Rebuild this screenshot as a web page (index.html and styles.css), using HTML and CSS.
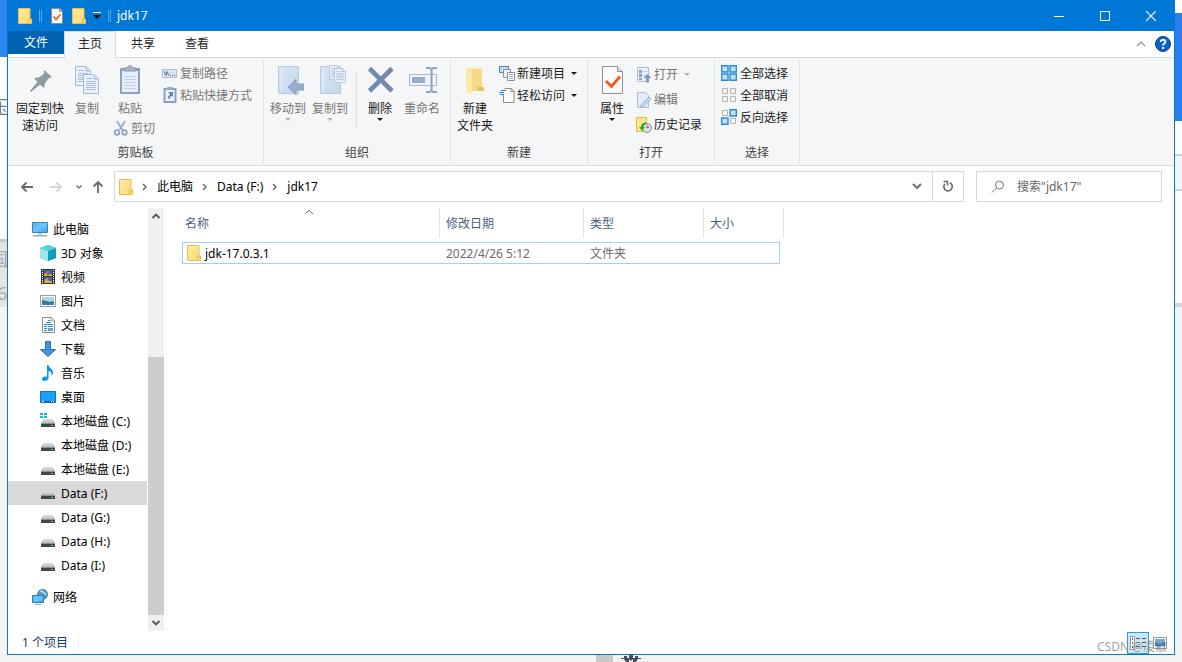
FILE: index.html
```html
<!DOCTYPE html>
<html lang="zh-CN">
<head>
<meta charset="utf-8">
<title>jdk17</title>
<link rel="stylesheet" href="styles.css">
</head>
<body>
<svg class="defs" width="0" height="0" aria-hidden="true">
  <defs>
    <linearGradient id="gFolder" x1="0" y1="0" x2="1" y2="1"><stop offset="0" stop-color="#ffeaa0"/><stop offset="1" stop-color="#ffdb74"/></linearGradient>
    <linearGradient id="gScreen" x1="0" y1="0" x2="1" y2="1"><stop offset="0" stop-color="#4fb4f8"/><stop offset=".5" stop-color="#6cc8ff"/><stop offset="1" stop-color="#2fa0f0"/></linearGradient>
    <linearGradient id="gSheet" x1="0" y1="0" x2="1" y2="1"><stop offset="0" stop-color="#d9e6f5"/><stop offset="1" stop-color="#c4d6ec"/></linearGradient>
    <linearGradient id="gDrive" x1="0" y1="0" x2="0" y2="1"><stop offset="0" stop-color="#e2e4e6"/><stop offset="1" stop-color="#b9bcc0"/></linearGradient>
    <symbol id="folder" viewBox="0 0 14 16"><path d="M.5.5h11.5v10.500h1.500v4.500H.5z" fill="url(#gFolder)" stroke="#e8bf4c"/><path d="M10.500 15V11.500H13" fill="none" stroke="#e8bf4c"/></symbol>
    <symbol id="checkdoc" viewBox="0 0 12 16"><path d="M.5.5h8l3 3v12H.5z" fill="#fafafa" stroke="#8b8b8b"/><path d="M8.500.5v3h3" fill="#ddd" stroke="#8b8b8b"/><path d="M2.500 8.500l2.500 3 4.500-5" fill="none" stroke="#e8642c" stroke-width="1.800"/></symbol>
    <symbol id="drive" viewBox="0 0 16 16"><path d="M3.500 6h9L15 10H1z" fill="url(#gDrive)"/><path d="M1 10h14v4H1z" fill="#414548"/><path d="M1 10h14v1H1z" fill="#8e9296"/><path d="M11 12h2v1h-2z" fill="#59e34c"/></symbol>
    <symbol id="page" viewBox="0 0 16 20"><path d="M.5.500h10.500l4.500 4.500v14.500H.5z" fill="#eaf1fa" stroke="#a3b9d8"/><path d="M11 .5V5h4.500" fill="#d2dff0" stroke="#a3b9d8"/><path d="M3 4.500h6M3 7.500h10M3 9.500h10M3 11.500h10M3 13.500h10M3 15.500h10" stroke="#a9bfdd"/></symbol>
    <symbol id="tri" viewBox="0 0 6 3"><path d="M0 0h6L3 3z" fill="currentColor"/></symbol>
    <symbol id="crumb" viewBox="0 0 6 8"><path d="M1 1l3 3-3 3" fill="none" stroke="#6d6d6d" stroke-width="1.500"/></symbol>
  </defs>
</svg>

<div class="backdrop" aria-hidden="true">
  <div class="edge-left"><span class="slab-blue"></span><span class="frag frag-a">压</span><span class="slab-grey"><span class="frag">国</span><span class="frag">6</span></span></div>
  <div class="edge-right"><span class="slab-blue"></span><span class="slab-field"></span><span class="slab-rest"></span></div>
  <div class="edge-bottom"><span class="bottom-block"></span>
    <svg width="22" height="8" viewBox="0 0 22 8"><path d="M1 3h3V1h3v2h2V0h4v3h2V1h3v2h3v1h-3l-2 3h-3V4l-2 2-2-2v3H6L4 4H1z" fill="#4b4a5c"/></svg>
  </div>
</div>

<main class="window">
  <header class="titlebar">
    <svg width="14" height="16"><use href="#folder"/></svg>
    <span class="title-sep"></span>
    <button class="quick quick-props" aria-label="属性"><svg width="12" height="16"><use href="#checkdoc"/></svg></button>
    <button class="quick quick-folder" aria-label="新建文件夹"><svg width="14" height="16"><use href="#folder"/></svg></button>
    <button class="quick quick-more" aria-label="自定义快速访问工具栏"><svg width="8" height="7" viewBox="0 0 8 7"><path d="M0 0h8v1H0z" fill="#fff"/><path d="M0 3h8L4 7z" fill="#111"/></svg></button>
    <span class="title-sep"></span>
    <h1>jdk17</h1>
    <div class="controls">
      <button aria-label="最小化"><svg width="10" height="10"><path d="M0 5.500h10" stroke="#fff"/></svg></button>
      <button aria-label="最大化"><svg width="10" height="10"><path d="M.5.500h9v9h-9z" fill="none" stroke="#fff"/></svg></button>
      <button aria-label="关闭"><svg width="10" height="10"><path d="M0 0l10 10M10 0L0 10" stroke="#fff" stroke-width="1.200"/></svg></button>
    </div>
  </header>

  <nav class="tabs">
    <button class="tab file">文件</button>
    <button class="tab active">主页</button>
    <button class="tab">共享</button>
    <button class="tab">查看</button>
    <span class="tab-tools">
      <button aria-label="最小化功能区"><svg width="10" height="6" viewBox="0 0 10 6"><path d="M1 5l4-4 4 4" fill="none" stroke="#8f8f8f" stroke-width="1.200"/></svg></button>
      <button aria-label="帮助" class="help"><svg width="16" height="16" viewBox="0 0 16 16"><circle cx="8" cy="8" r="7.500" fill="#0a63c4" stroke="#083f7f"/><path d="M5.700 6c0-3 4.700-3 4.700-.4C10.400 7.500 8 7.400 8 9.600" fill="none" stroke="#fff" stroke-width="1.900"/><path d="M7 11h2v2H7z" fill="#fff"/></svg></button>
    </span>
  </nav>

  <section class="ribbon">
    <div class="group g-clip">
      <div class="group-body">
        <button class="big w-pin"><svg width="32" height="32" viewBox="0 0 32 32"><path d="M20 5l8 7-3 1-4 5-1 5-4-3.500-9 7.500-1-1 7.500-9L10 13l5-.5 5-4z" fill="#8b9aa3"/></svg><span>固定到快<br>速访问</span></button>
        <button class="big w-copy" disabled><svg width="32" height="32" viewBox="0 0 32 32"><use href="#page" x="4" y="1" width="16" height="20"/><use href="#page" x="12" y="9" width="16" height="20"/></svg><span>复制</span></button>
        <div class="paste-col">
          <button class="big" disabled><svg width="32" height="32" viewBox="0 0 32 32"><path d="M6 3h20v26H6z" fill="#8ba1c4"/><path d="M8 6h16v21H8z" fill="#e6eef9"/><path d="M10 11.500h12M10 14.500h12M10 17.500h12M10 20.500h12M10 23.500h12" stroke="#c1d0e6"/><path d="M10 6V3h3c1-3 5-3 6 0h3v3z" fill="#a9b6c8" stroke="#8795ab"/></svg><span>粘贴</span></button>
          <button class="small" disabled><svg width="16" height="16" viewBox="0 0 16 16"><path d="M4 1l5.500 9M12 1L6.500 10" stroke="#9aadca" stroke-width="1.800"/><circle cx="4" cy="12.500" r="2.300" fill="none" stroke="#8ca3c5" stroke-width="1.700"/><circle cx="11.500" cy="12.500" r="2.300" fill="none" stroke="#8ca3c5" stroke-width="1.700"/></svg><span>剪切</span></button>
        </div>
        <div class="rows">
          <button class="small" disabled><svg width="16" height="16" viewBox="0 0 16 16"><path d="M.5 4.500h14v8H.5z" fill="#d8e4f3" stroke="#aabdd9"/><path d="M2 6.500l2 4 1-4 2 4M8 10.500h1M10 10.500h1M12 10.500h1" stroke="#5c7194" fill="none"/></svg><span>复制路径</span></button>
          <button class="small" disabled><svg width="16" height="16" viewBox="0 0 16 16"><path d="M2.500 2h11v13h-11z" fill="#eef3fa" stroke="#8ba1c4" stroke-width="2"/><path d="M5 0h6v3H5z" fill="#9aabc6"/><path d="M6 5h5v5L9.500 8.500 7 12 5.500 11 8 7z" fill="#6480ad"/></svg><span>粘贴快捷方式</span></button>
        </div>
      </div>
      <h2>剪贴板</h2>
    </div>
    <div class="group g-org">
      <div class="group-body">
        <button class="big w-42" disabled><svg width="32" height="32" viewBox="0 0 32 32"><path d="M6.500 1.500h20v27h-20z" fill="url(#gSheet)" stroke="#b7cae4"/><path d="M9 2v26" stroke="#e6effa"/><path d="M16 22l8-8v5h8v6h-8v5z" fill="#9aaecb" stroke="#8ba1c2"/></svg><span>移动到</span><svg class="tri" width="6" height="3"><use href="#tri"/></svg></button>
        <button class="big w-42" disabled><svg width="32" height="32" viewBox="0 0 32 32"><path d="M6.500 1.500h20v27h-20z" fill="url(#gSheet)" stroke="#b7cae4"/><path d="M9 2v26" stroke="#e6effa"/><use href="#page" x="15" y="0" width="12" height="15"/><use href="#page" x="20" y="3" width="12" height="15"/></svg><span>复制到</span><svg class="tri" width="6" height="3"><use href="#tri"/></svg></button>
        <i class="inner-sep"></i>
        <button class="big w-40"><svg width="32" height="32" viewBox="0 0 32 32"><path d="M5.500 3.500L28 26M28 3.500L5.500 26" stroke="#7289b2" stroke-width="4.600"/></svg><span>删除</span><svg class="tri" width="6" height="3"><use href="#tri"/></svg></button>
        <button class="big w-44" disabled><svg width="32" height="32" viewBox="0 0 32 32"><path d="M3.500 9.500h27v11h-27z" fill="#f1f5fb" stroke="#a5badb"/><path d="M6 12h13v6H6z" fill="#98acce"/><path d="M20 3h4l1.500 1.500L27 3h4M25.500 4v22M20 27h4l1.500-1.500L27 27h4" fill="none" stroke="#8fa4c6" stroke-width="2"/></svg><span>重命名</span></button>
      </div>
      <h2>组织</h2>
    </div>
    <div class="group g-new">
      <div class="group-body">
        <button class="big w-48"><svg width="32" height="32" viewBox="0 0 32 32"><path d="M7 3h16v23H7z" fill="#f7d985"/><path d="M18 22h7v4h-7z" fill="#e9c15e"/><path d="M7 3l6 4v23l-6-3z" fill="#ffe9a6"/><path d="M7 3h16v1H9z" fill="#fdebb5"/></svg><span>新建<br>文件夹</span></button>
        <div class="rows">
          <button class="small"><svg width="16" height="16" viewBox="0 0 16 16"><path d="M.5 1.500h9v6h-9z" fill="#bfe0f2" stroke="#4b7fa3"/><path d="M4.500 4.500h7v8h-7z" fill="#f4f4f4" stroke="#899"/><path d="M8.500 7.500h7v8h-7z" fill="#fff" stroke="#8c8f94"/><path d="M10 9.500h4M10 11.500h4M10 13.500h4" stroke="#93b7d6"/></svg><span>新建项目</span><svg class="tri side" width="6" height="3"><use href="#tri"/></svg></button>
          <button class="small"><svg width="16" height="16" viewBox="0 0 16 16"><path d="M5.500 1.500h7l2.500 2.500v11.500H4.500V7" fill="#fafafa" stroke="#8c8c8c"/><path d="M12 1v3.500h3" fill="none" stroke="#8c8c8c"/><path d="M2 3.500h5M0 5.500h5M1 7.500h4" stroke="#2387d8"/></svg><span>轻松访问</span><svg class="tri side" width="6" height="3"><use href="#tri"/></svg></button>
        </div>
      </div>
      <h2>新建</h2>
    </div>
    <div class="group g-open">
      <div class="group-body">
        <button class="big w-48"><svg width="32" height="32" viewBox="0 0 32 32"><path d="M6.500 1.500h15l5 5v22h-20z" fill="#fbfbfb" stroke="#929292"/><path d="M21.500 1.500v5h5" fill="#e2e2e2" stroke="#929292"/><path d="M10 16l5.500 5.500L24 11.500" fill="none" stroke="#f1591c" stroke-width="2.800"/></svg><span>属性</span><svg class="tri" width="6" height="3"><use href="#tri"/></svg></button>
        <div class="rows loose">
          <button class="small" disabled><svg width="16" height="16" viewBox="0 0 16 16"><path d="M1.500.500h11v14h-11z" fill="#e8eff8" stroke="#a9bcd8"/><path d="M3 3h3v3H3zM3 7h3v3H3zM3 11h3v2H3z" fill="#8ba2c7"/><path d="M7.500 4.500h4M7.500 8.500h3" stroke="#b0c2dc"/><path d="M11.500 7l4 4h-2.500v4.500h-3V11H7.500z" fill="#8398be"/></svg><span>打开</span><svg class="tri side" width="6" height="3"><use href="#tri"/></svg></button>
          <button class="small" disabled><svg width="16" height="16" viewBox="0 0 16 16"><path d="M1.500.500h8l3 3v12h-11z" fill="#e3ecf8" stroke="#a9bcd8"/><path d="M5 13L13 5l2 2-8 8-3 .5z" fill="#c9d8ee" stroke="#9fb4d4"/></svg><span>编辑</span></button>
          <button class="small"><svg width="16" height="16" viewBox="0 0 16 16"><path d="M.5.500h10v14H.5z" fill="#ffe68a" stroke="#dfb93c"/><circle cx="11" cy="11" r="4.500" fill="#dfe1e3" stroke="#85898d"/><path d="M11 8.500V11l2-1" stroke="#666" fill="none"/><path d="M10 5.500C6 5.500 5 8 5 10H3l3 4 3-4H7.500c0-2 1-2.500 2.500-2.500z" fill="#2fa82f"/></svg><span>历史记录</span></button>
        </div>
      </div>
      <h2>打开</h2>
    </div>
    <div class="group g-select">
      <div class="group-body">
        <div class="rows">
          <button class="small"><svg width="16" height="16" viewBox="0 0 16 16"><path d="M.7.700h6.300V7H.7zM9 .7h6.300V7H9zM.7 9h6.300v6.300H.7zM9 9h6.300v6.300H9z" fill="#bfe2fb" stroke="#2a8ddc" stroke-width="1.400"/></svg><span>全部选择</span></button>
          <button class="small"><svg width="16" height="16" viewBox="0 0 16 16"><path d="M1.500 1.500h5v5h-5zM9.500 1.500h5v5h-5zM1.500 9.500h5v5h-5zM9.500 9.500h5v5h-5z" fill="#fff" stroke="#b0b0b0"/></svg><span>全部取消</span></button>
          <button class="small"><svg width="16" height="16" viewBox="0 0 16 16"><path d="M1.500 1.500h5v5h-5zM9.500 9.500h5v5h-5z" fill="#fff" stroke="#b0b0b0"/><path d="M9 .7h6.300V7H9zM.7 9h6.300v6.300H.7z" fill="#bfe2fb" stroke="#2a8ddc" stroke-width="1.400"/></svg><span>反向选择</span></button>
        </div>
      </div>
      <h2>选择</h2>
    </div>
  </section>

  <section class="addressbar">
    <div class="history">
      <button aria-label="后退"><svg width="14" height="12" viewBox="0 0 14 12"><path d="M13 6H2M6.500 1.500L2 6l4.500 4.500" fill="none" stroke="#6a6a6a" stroke-width="1.800"/></svg></button>
      <button aria-label="前进" disabled><svg width="14" height="12" viewBox="0 0 14 12"><path d="M1 6h11M7.500 1.500L12 6l-4.500 4.500" fill="none" stroke="#d6d6d6" stroke-width="1.800"/></svg></button>
      <button aria-label="最近位置" class="narrow"><svg width="8" height="6" viewBox="0 0 8 6"><path d="M1.500 1.500L4 4l2.500-2.500" fill="none" stroke="#777" stroke-width="1.500"/></svg></button>
      <button aria-label="向上" class="up"><svg width="12" height="14" viewBox="0 0 12 14"><path d="M6 13V2M1.500 6.500L6 2l4.500 4.500" fill="none" stroke="#6a6a6a" stroke-width="1.800"/></svg></button>
    </div>
    <div class="path">
      <svg width="14" height="16"><use href="#folder"/></svg>
      <svg width="6" height="8"><use href="#crumb"/></svg>
      <a href="#">此电脑</a>
      <svg width="6" height="8"><use href="#crumb"/></svg>
      <a href="#">Data (F:)</a>
      <svg width="6" height="8"><use href="#crumb"/></svg>
      <a href="#">jdk17</a>
      <button class="path-drop" aria-label="以前的位置"><svg width="10" height="7" viewBox="0 0 10 7"><path d="M1 1l4 4 4-4" fill="none" stroke="#6a6a6a" stroke-width="1.900"/></svg></button>
      <button class="refresh" aria-label="刷新"><svg width="12" height="13" viewBox="0 0 12 13"><path d="M2.800 4a4.200 4.200 0 1 0 5-1.200" fill="none" stroke="#6a6a6a" stroke-width="1.700"/><path d="M1.500 1.500h4v4" fill="none" stroke="#6a6a6a" stroke-width="1.500"/></svg></button>
    </div>
    <label class="search">
      <svg width="14" height="14" viewBox="0 0 14 14"><circle cx="8.500" cy="5" r="4" fill="none" stroke="#777"/><path d="M5.500 8L1 12.500" stroke="#777"/></svg>
      <input type="search" aria-label="搜索" placeholder='搜索"jdk17"'>
    </label>
  </section>

  <section class="content">
    <aside class="tree">
      <ul>
        <li class="root"><a href="#"><svg width="16" height="16" viewBox="0 0 16 16"><path d="M.5 1.500h15v10H.5z" fill="url(#gScreen)" stroke="#3d83b5"/><path d="M6 12h4v1.500H6z" fill="#b5c4cf"/><path d="M1 14h14v1.500H1z" fill="#9aabb8"/></svg><span>此电脑</span></a></li>
        <li><a href="#"><svg width="16" height="16" viewBox="0 0 16 16"><path d="M8 0l8 3v10l-8 3-8-3V3z" fill="#35c3d6"/><path d="M0 3l8 3v10l-8-3z" fill="#9be8ec"/><path d="M8 6l8-3v10l-8 3z" fill="#0f9fbd"/><path d="M8 0l8 3-8 3-8-3z" fill="#56cfdd"/></svg><span>3D 对象</span></a></li>
        <li><a href="#"><svg width="16" height="16" viewBox="0 0 16 16"><path d="M1 0h14v15H1z" fill="#373737"/><path d="M4 1h8v6H4zM4 8h8v6H4z" fill="#3c66bb"/><path d="M5 4h2l1-2 1 3h3v2H4zM5 11l2-2 2 3h3v2H4z" fill="#e0ad27"/><path d="M7 4h2v2H7z" fill="#b5432a"/><path d="M2.500 1v13M13.500 1v13" stroke="#fff" stroke-dasharray="1 1"/></svg><span>视频</span></a></li>
        <li><a href="#"><svg width="16" height="16" viewBox="0 0 16 16"><path d="M.5 2.500h15v11H.5z" fill="#fff" stroke="#999"/><path d="M2 4h12v8H2z" fill="#a8d6f4"/><path d="M2 7l4 1 4 1 4-1v2H2z" fill="#3d706a"/><path d="M2 10h12v2H2z" fill="#427ca8"/></svg><span>图片</span></a></li>
        <li><a href="#"><svg width="16" height="16" viewBox="0 0 16 16"><path d="M2.500.500h9l3 3v12h-12z" fill="#fff" stroke="#8f8f8f"/><path d="M11 .5V4h3.500" fill="none" stroke="#999"/><path d="M8 3.500h2M6 5.500h5M4 7.500h9M4 9.500h3M8 9.500h5M4 11.500h3M4 13.500h3" stroke="#2492dd"/><path d="M8 11h5v3H8z" fill="#6ca7c6"/></svg><span>文档</span></a></li>
        <li><a href="#"><svg width="16" height="16" viewBox="0 0 16 16"><path d="M5.500.500h5v8h5L8 15.500.5 8.500h5z" fill="#3f93dc" stroke="#2a74b8"/></svg><span>下载</span></a></li>
        <li><a href="#"><svg width="16" height="16" viewBox="0 0 16 16"><path d="M7 0h1.500c.5 3 4.500 4 4.500 7.500 0 1.500-.5 2.500-1.500 3 .5-3-1-4-3-4.500v7c0 2-2 3-4 3-3 0-3.500-3-1-4 1.200-.6 2.500-.5 3.500 0z" fill="#0f97f2"/></svg><span>音乐</span></a></li>
        <li><a href="#"><svg width="16" height="16" viewBox="0 0 16 16"><path d="M.5 2.500h15v11H.5z" fill="#1ba1fb" stroke="#1173b5"/><path d="M1 12h14v1H1z" fill="#0d63a4"/><path d="M2 12.500h2M11 12.500h1M13 12.500h1" stroke="#fff"/></svg><span>桌面</span></a></li>
        <li><a href="#"><svg width="16" height="16" viewBox="0 0 16 16"><use href="#drive"/><path d="M0 0h3v2H0zM4 0h3v2H4zM0 3h3v2H0zM4 3h3v2H4z" fill="#14b3ee"/></svg><span>本地磁盘 (C:)</span></a></li>
        <li><a href="#"><svg width="16" height="16"><use href="#drive"/></svg><span>本地磁盘 (D:)</span></a></li>
        <li><a href="#"><svg width="16" height="16"><use href="#drive"/></svg><span>本地磁盘 (E:)</span></a></li>
        <li class="selected"><a href="#"><svg width="16" height="16"><use href="#drive"/></svg><span>Data (F:)</span></a></li>
        <li><a href="#"><svg width="16" height="16"><use href="#drive"/></svg><span>Data (G:)</span></a></li>
        <li><a href="#"><svg width="16" height="16"><use href="#drive"/></svg><span>Data (H:)</span></a></li>
        <li><a href="#"><svg width="16" height="16"><use href="#drive"/></svg><span>Data (I:)</span></a></li>
        <li class="root network"><a href="#"><svg width="16" height="16" viewBox="0 0 16 16"><circle cx="10.500" cy="5.500" r="5" fill="#5b9dc6" stroke="#39779e"/><path d="M8 3c2-2 3-1 3 0s3 1 3 3" stroke="#b8dded" stroke-width="1.500" fill="none"/><path d="M.5 6.500h11v7H.5z" fill="url(#gScreen)" stroke="#2b7db4"/><path d="M3 15.500h6" stroke="#9aabb8"/></svg><span>网络</span></a></li>
      </ul>
    </aside>
    <div class="scroll" aria-hidden="true">
      <svg width="16" height="16" viewBox="0 0 16 16"><path d="M4.500 10L8 6.500l3.500 3.500" fill="none" stroke="#555" stroke-width="1.900"/></svg>
      <span class="track"><span class="thumb"></span></span>
      <svg width="16" height="16" viewBox="0 0 16 16"><path d="M4.500 6L8 9.500 11.500 6" fill="none" stroke="#555" stroke-width="1.900"/></svg>
    </div>
    <div class="files">
      <table>
        <thead><tr><th class="c-name">名称<svg class="sort" width="10" height="6" viewBox="0 0 10 6"><path d="M1 5l4-4 4 4" fill="none" stroke="#777"/></svg></th><th class="c-date">修改日期</th><th class="c-type">类型</th><th class="c-size">大小</th></tr></thead>
        <tbody><tr><td><span class="file-name"><svg width="14" height="16"><use href="#folder"/></svg><span>jdk-17.0.3.1</span></span></td><td>2022/4/26 5:12</td><td>文件夹</td><td></td></tr></tbody>
      </table>
    </div>
  </section>

  <footer class="status">
    <span class="count">1 个项目</span>
    <div class="views">
      <button class="view on" aria-label="详细信息"><svg width="16" height="14" viewBox="0 0 16 14"><path d="M.5.500h4v13h-4z" fill="#fff" stroke="#999"/><path d="M2 3h1M2 11h1" stroke="#2a7fd4" stroke-width="2"/><path d="M2 7h1" stroke="#d44" stroke-width="2"/><path d="M6 2.500h4M12 2.500h4M6 6.500h4M12 6.500h4M6 10.500h4M12 10.500h4" stroke="#555"/></svg></button>
      <button class="view" aria-label="大图标"><svg width="14" height="12" viewBox="0 0 14 12"><path d="M.5.500h13v11H.5z" fill="#fff" stroke="#999"/><path d="M2 2h10v7H2z" fill="#68b5f5"/><path d="M2 6l5 1 5-2v4H2z" fill="#246fae"/></svg></button>
    </div>
    <span class="watermark">CSDN @凌散</span>
  </footer>
</main>
</body>
</html>
```
FILE: styles.css
```css
* { box-sizing: border-box; }
body {
  position: relative;
  display: flex;
  min-height: 100vh;
  margin: 0;
  padding: 0 7px 7px;
  background: #f4f4f4;
  color: #000;
  font: 12px/17px "Noto Sans", "Noto Sans CJK SC", sans-serif;
}
button, input { font: inherit; color: inherit; border: 0; padding: 0; margin: 0; background: none; }
a { color: inherit; text-decoration: none; }
h1, h2 { margin: 0; font: inherit; }
svg { flex: none; display: block; }
.defs { position: absolute; }

/* slivers of the desktop around the window */
.backdrop { position: absolute; inset: 0; overflow: hidden; }
.edge-left, .edge-right { position: absolute; top: 0; bottom: 0; width: 7px; overflow: hidden; }
.edge-left { left: 0; }
.edge-right { right: 0; padding-top: 13px; background: linear-gradient(#fff 307px, #f4f4f4 307px); }
.edge-left { background: linear-gradient(#fff 240px, #f4f4f4 240px); }
.edge-left span, .edge-right span { display: block; }
.edge-left .slab-blue { height: 57px; background: #2f85ee; }
.edge-right .slab-blue { height: 108px; background: #2a7fe8; }
.frag { margin-left: -10px; color: #aaa; font-size: 18px; line-height: 34px; }
.frag-a { margin-top: 33px; color: #777; line-height: 34px; }
.slab-grey { height: 68px; margin-top: 115px; border-top: 3px solid #c8c8c8; background: #e4e4e4; }
.slab-grey .frag + .frag { margin-left: -3px; }
.slab-field { height: 37px; margin-top: 33px; border: solid #d0d0d0; border-width: 2px 0; background: #f3f5f6; }
.slab-rest { height: 4px; margin-top: 112px; background: #d5d5d5; }
.edge-bottom { position: absolute; left: 596px; right: 0; bottom: 0; height: 7px; display: flex; gap: 7px; }
.bottom-block { width: 17px; background: #c8c8c8; }

.window {
  position: relative;
  flex: 1;
  min-width: 0;
  display: flex;
  flex-direction: column;
  border: 1px solid #0078d7;
  border-top: 0;
  background: #fff;
}

.titlebar { display: flex; align-items: center; height: 31px; padding-left: 10px; background: #0078d7; color: #fff; }
.title-sep { width: 3px; height: 12px; margin-left: 7px; border: solid #5aa7e4; border-width: 0 1px; }
.quick { margin-left: 9px; }
.quick-more { margin-left: 7px; }
.titlebar h1 { margin-left: 6px; }
.controls { display: flex; margin-left: auto; align-self: stretch; }
.controls button { display: grid; place-items: center; width: 46px; }

.tabs { display: flex; height: 27px; border-bottom: 1px solid #dadbdc; }
.tab { width: 54px; padding-bottom: 2px; color: #262626; }
.tab.file { width: 56px; height: 23px; padding: 0; background: #0063b1; color: #fff; }
.tab.active { width: 52px; height: 27px; padding-bottom: 3px; border: 1px solid #dadbdc; border-bottom: 0; background: #f5f6f7; }
.tab-tools { display: flex; align-items: center; gap: 9px; margin-left: auto; padding-right: 3px; }

.ribbon { display: flex; padding: 2px 0; height: 108px; border-bottom: 1px solid #dadbdc; background: #f5f6f7; }
.group { display: flex; flex-direction: column; border-right: 1px solid #e2e3e4; }
.group-body { flex: 1; display: flex; align-items: flex-start; }
.group h2 { margin-bottom: 2px; text-align: center; color: #444; }
.g-clip { width: 256px; }
.g-clip .group-body { padding-left: 4px; }
.g-org { width: 187px; }
.g-org .group-body { padding-left: 3px; }
.g-new { width: 137px; }
.g-open { width: 127px; }
.g-select { width: 85px; }
.g-select .group-body { padding-left: 6px; }

.big { display: flex; flex-direction: column; align-items: center; width: 48px; padding-top: 5px; color: #1a1a1a; }
.big > span { margin-top: 3px; white-space: nowrap; }
.big .tri { margin-top: 1px; }
.big:disabled, .small:disabled { color: #777; }
:disabled .tri { color: #b4b4b4; }
.w-pin { width: 56px; }
.w-copy { width: 38px; }
.w-40 { width: 40px; }
.w-42 { width: 42px; }
.w-44 { width: 44px; }
.inner-sep { width: 1px; height: 55px; margin: 13px 3px 0 5px; background: #dcdddf; }
.paste-col { width: 56px; }
.paste-col .small { padding-left: 7px; }
.small { display: flex; align-items: center; gap: 2px; height: 22px; color: #1a1a1a; white-space: nowrap; }
.rows { padding-top: 2px; }
.loose .small { height: 25px; }
.g-select .small { gap: 3px; }
.side { margin-left: 4px; }

.addressbar { display: flex; align-items: center; height: 42px; padding: 5px 12px 6px 0; }
.history { display: flex; align-items: center; width: 106px; padding-left: 12px; gap: 15px; }
.history .narrow { margin-right: -6px; margin-left: -3px; }
.path { display: flex; flex: 1; align-items: center; align-self: stretch; gap: 9px; padding-left: 4px; border: 1px solid #d9d9d9; }
.path-drop, .refresh { display: grid; place-items: center; align-self: stretch; width: 30px; }
.path-drop { margin-left: auto; }
.refresh { width: 31px; margin-left: -9px; border-left: 1px solid #d9d9d9; }
.search { display: flex; align-items: center; align-self: stretch; gap: 12px; width: 186px; margin-left: 12px; padding-left: 14px; border: 1px solid #d9d9d9; }
.search input { flex: 1; min-width: 0; outline: 0; }
.search input::placeholder { color: #666; opacity: 1; }

.content { flex: 1; display: flex; }
.tree { width: 140px; padding-top: 9px; }
.tree ul { margin: 0; padding: 0; list-style: none; }
.tree a { display: flex; align-items: center; gap: 5px; height: 24px; padding-left: 32px; white-space: nowrap; }
.tree .root a { padding-left: 24px; }
.tree .network { margin-top: 8px; }
.tree .selected { width: 139px; background: #d9d9d9; }
.scroll { display: flex; flex-direction: column; width: 16px; background: #f0f0f0; }
.track { display: flex; flex: 1; flex-direction: column; justify-content: flex-end; }
.thumb { height: 66%; background: #cdcdcd; }
.files { flex: 1; margin-left: 2px; padding-left: 15px; border-left: 1px solid #f3f3f3; }

table { table-layout: fixed; width: 598px; border-collapse: separate; border-spacing: 0; }
th { position: relative; height: 30px; padding: 0 6px; border-right: 1px solid #e4e4e4; text-align: left; font-weight: 400; color: #4c607a; }
th:first-child { padding-left: 3px; }
.c-name { width: 258px; }
.c-date { width: 144px; }
.c-type { width: 120px; }
.c-size { width: 76px; }
th.c-size { border-right: 0; }
.c-size::after { content: ""; position: absolute; top: 0; right: -4px; width: 1px; height: 30px; background: #e4e4e4; }
.sort { position: absolute; top: 1px; left: 122px; }
tbody::before { content: ""; display: block; height: 4px; }
td { height: 22px; padding: 0 6px; border: solid #99d1ff; border-width: 1px 0; color: #6d6d6d; }
td:first-child { padding-left: 4px; border-left-width: 1px; color: #000; }
td:last-child { border-right-width: 1px; }
.file-name { display: flex; align-items: center; gap: 4px; }

.status { position: relative; display: flex; align-items: center; height: 23px; padding: 0 7px 0 14px; color: #1e395b; }
.count { padding-right: 10px; border-right: 1px solid #f0f0f0; }
.views { display: flex; align-items: center; gap: 4px; margin-left: auto; }
.view { display: grid; place-items: center; height: 22px; }
.view.on { width: 22px; border: 1px solid #26a0da; background: #cce8f7; }
.watermark { position: absolute; right: 7px; bottom: -1px; color: #8a8a8acc; }
```
